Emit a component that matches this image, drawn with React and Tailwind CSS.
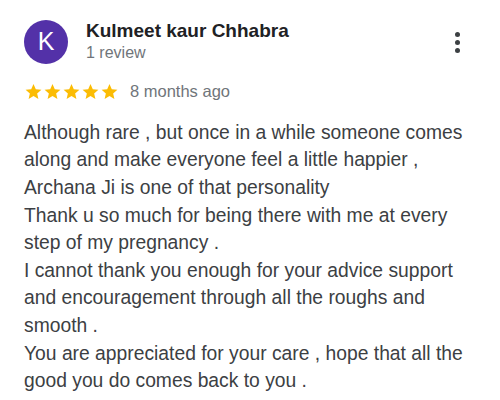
import React from 'react';

const lines = [
  'Although rare , but once in a while someone comes along and make everyone feel a little happier ,',
  'Archana Ji is one of that personality',
  'Thank u so much for being there with me at every step of my pregnancy .',
  'I cannot thank you enough for your advice support and encouragement through all the roughs and smooth .',
  'You are appreciated for your care , hope that all the good you do comes back to you .',
];

function Star() {
  return (
    <svg viewBox="0 0 24 24" className="w-[19px] h-[19px]" fill="#fbbc04">
      <path d="M12 2.5l2.9 6.6 7.1.6-5.4 4.7 1.6 7-6.2-3.7-6.2 3.7 1.6-7L2 9.7l7.1-.6z" />
    </svg>
  );
}

export default function App() {
  return (
    <div className="w-[500px] h-[400px] bg-white px-6 pt-[20px] text-[#3c4043]" style={{ fontFamily: '"Liberation Sans", Arial, sans-serif' }}>
      <div className="flex items-start">
        <div className="w-11 h-11 rounded-full bg-[#5331a8] flex items-center justify-center text-white text-[25px] shrink-0">K</div>
        <div className="ml-[18px] flex-1 -mt-[1px]">
          <div className="text-[19px] font-bold text-[#202124] leading-[24px]">Kulmeet kaur Chhabra</div>
          <div className="text-[16px] text-[#70757a] leading-[20px]">1 review</div>
        </div>
        <div className="flex flex-col gap-[3px] items-center mt-[12px] mr-[16px]">
          <span className="w-[5px] h-[5px] rounded-full bg-[#3c4043]" />
          <span className="w-[5px] h-[5px] rounded-full bg-[#3c4043]" />
          <span className="w-[5px] h-[5px] rounded-full bg-[#3c4043]" />
        </div>
      </div>
      <div className="flex items-center mt-[15px]">
        <div className="flex">
          <Star /><Star /><Star /><Star /><Star />
        </div>
        <span className="ml-[11px] text-[16.5px] text-[#70757a]">8 months ago</span>
      </div>
      <div className="mt-[15px] text-[19.3px] leading-[27.6px]">
        {lines.map((l) => (
          <div key={l}>{l}</div>
        ))}
      </div>
    </div>
  );
}
